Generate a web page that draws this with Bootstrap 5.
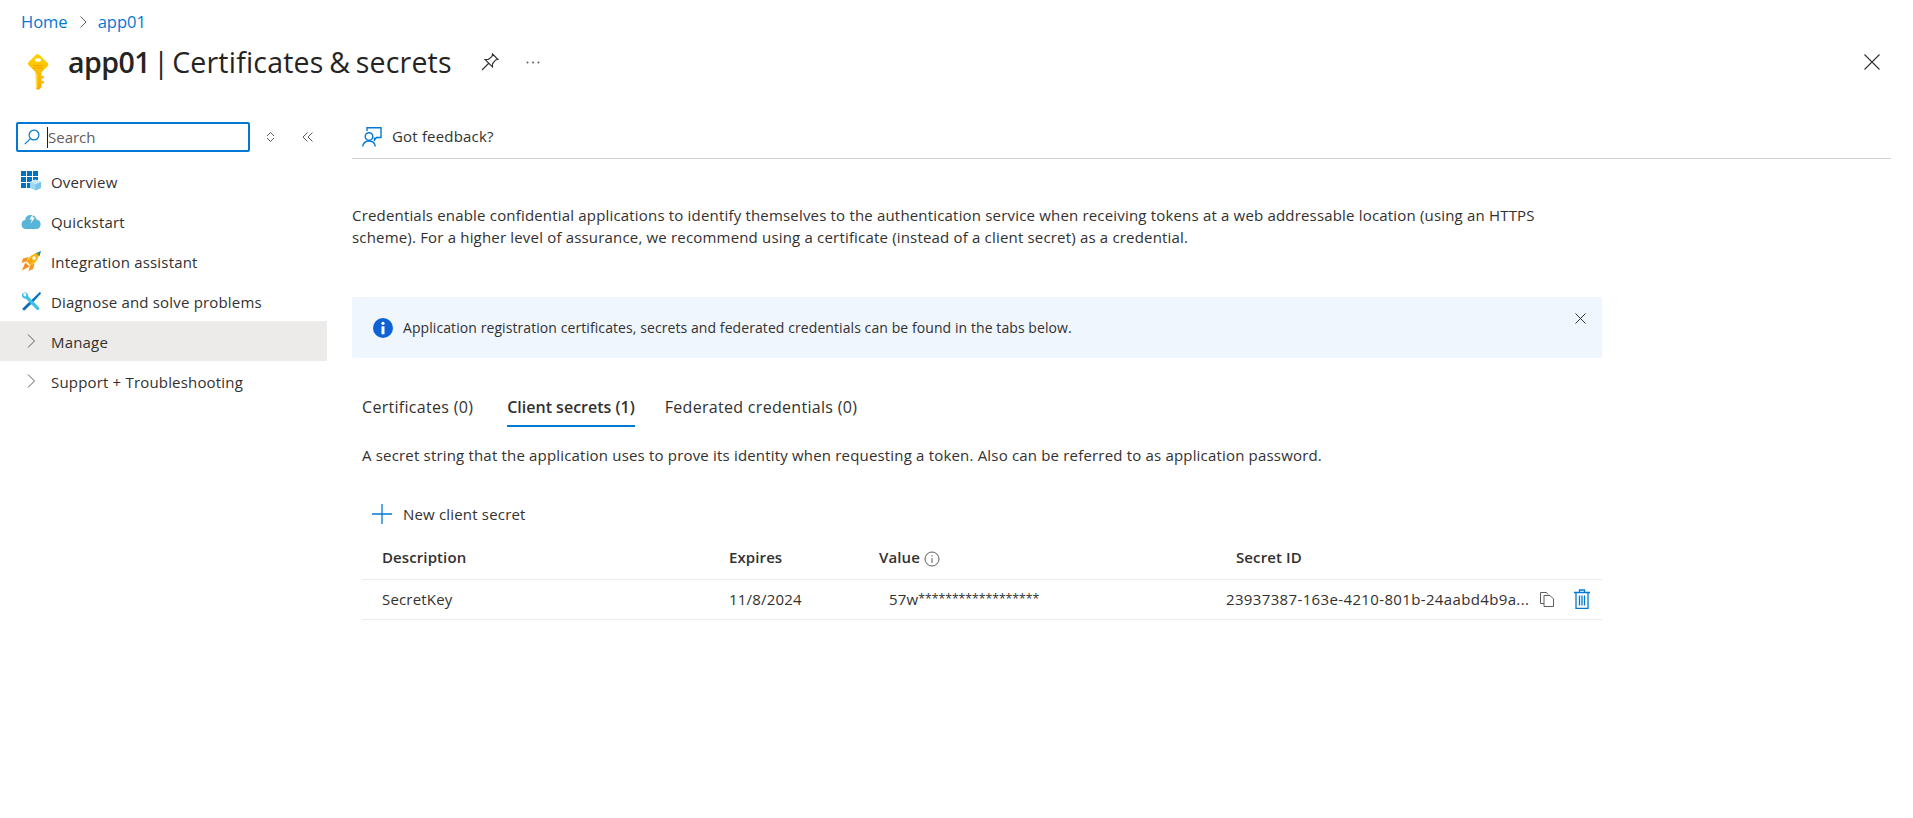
<!DOCTYPE html>
<html lang="en">
<head>
    <meta charset="UTF-8">
    <meta name="viewport" content="width=device-width, initial-scale=1.0">
    <title>app01 | Certificates &amp; secrets</title>
    <link rel="stylesheet" href="https://cdn.jsdelivr.net/npm/bootstrap@5.3.3/dist/css/bootstrap.min.css">
    <style>
        body {
            font-family: "Open Sans", "Liberation Sans", sans-serif;
            font-size: 15px;
            color: #323130;
            background: #fff;
            height: 818px;
            overflow: hidden;
            letter-spacing: 0.18px;
        }

        a {
            color: inherit;
            text-decoration: none;
        }

        .crumbs {
            --bs-breadcrumb-margin-bottom: 0;
            --bs-breadcrumb-item-padding-x: 0;
            --bs-breadcrumb-divider: "";
            padding: 10px 0 0 21px;
            height: 34px;
            font-size: 16.5px;
            line-height: 24px;
            letter-spacing: 0;
        }

        .crumbs a {
            color: #0078d4;
        }

        .crumbs svg {
            margin: 0 11px 0 12px;
        }

        .title-row {
            height: 40px;
            margin-top: 8px;
            padding-left: 27px;
            padding-right: 33px;
        }

        .key-ico {
            margin-top: 20px;
        }

        .title-text {
            font-size: 28.5px;
            line-height: 40px;
            font-weight: 400;
            margin: 0 26px 0 19px;
            letter-spacing: 0.2px;
            word-spacing: -4.5px;
            color: #252423;
        }

        .title-text b {
            font-weight: 600;
            letter-spacing: -0.5px;
        }

        .title-page {
            word-spacing: -2px;
        }

        .page-body {
            margin-top: 40px;
        }

        .side-col {
            width: 327px;
            flex-shrink: 0;
        }

        .search-row {
            height: 30px;
            padding-left: 16px;
        }

        .search-box {
            width: 234px;
            height: 30px;
            border: 2px solid #0078d4;
            border-radius: 2px;
            padding-left: 6px;
        }

        .search-box input {
            border: 0;
            outline: 0;
            padding: 0 0 0 8px;
            background: transparent;
            box-shadow: none;
            font-size: 15px;
            height: 26px;
        }

        .search-box input::placeholder {
            color: #605e5c;
        }

        .text-caret {
            position: absolute;
            left: 29px;
            top: 3px;
            width: 1px;
            height: 21px;
            background: #201f1e;
        }

        .side-tools {
            margin-left: 16px;
            gap: 27px;
        }

        .side-nav {
            --bs-list-group-bg: transparent;
            --bs-list-group-border-width: 0;
            --bs-list-group-border-radius: 0;
            --bs-list-group-item-padding-x: 21px;
            --bs-list-group-item-padding-y: 0;
            --bs-list-group-color: #323130;
            margin-top: 9px;
        }

        .side-nav .list-group-item {
            height: 40px;
            gap: 10px;
        }

        .side-nav .list-group-item span {
            padding-top: 2px;
        }

        .side-nav .is-hover {
            background: #edebe9;
        }

        .nav-ico {
            width: 20px;
            height: 20px;
            flex-shrink: 0;
        }

        .main-col {
            margin-left: 25px;
            width: 1539px;
        }

        .cmd-bar {
            height: 37px;
            padding: 0 0 7px 10px;
            border-bottom: 1px solid #d2d0ce;
            gap: 10px;
        }

        .intro-text {
            margin: 45px 0 0;
            line-height: 22px;
            white-space: nowrap;
        }

        .notice-box {
            --bs-alert-margin-bottom: 0;
            --bs-alert-border-radius: 2px;
            width: 1250px;
            height: 61px;
            margin-top: 49px;
            padding: 0 0 0 21px;
            border: 0;
            background: #eff6fe;
            color: #323130;
            font-size: 14px;
            letter-spacing: 0.08px;
            gap: 10px;
        }

        .notice-close {
            position: absolute;
            right: 16px;
            top: 16px;
            line-height: 0;
        }

        .tab-strip {
            margin: 32px 0 0 10px;
            gap: 34px;
            --bs-nav-link-padding-x: 0;
            --bs-nav-link-padding-y: 0;
            --bs-nav-link-color: #323130;
            --bs-nav-link-hover-color: #323130;
            font-size: 16px;
            letter-spacing: 0.3px;
        }

        .tab-strip .nav-link {
            height: 37px;
            line-height: 34px;
        }

        .tab-strip .nav-link.active {
            font-weight: 600;
            letter-spacing: 0;
            margin-right: -4px;
            border-bottom: 2px solid #0078d4;
        }

        .lead-line {
            margin: 17px 0 0 10px;
            line-height: 23px;
        }

        .add-btn {
            --bs-btn-padding-x: 0;
            --bs-btn-padding-y: 0;
            --bs-btn-border-width: 0;
            --bs-btn-color: #323130;
            --bs-btn-font-size: 15px;
            margin: 35px 0 0 20px;
            gap: 11px;
            height: 24px;
            letter-spacing: inherit;
        }

        .secret-table {
            --bs-table-color: #323130;
            --bs-table-border-color: #edebe9;
            width: 1240px;
            margin: 11px 0 0 10px;
            table-layout: fixed;
            font-size: 15px;
        }

        .secret-table th,
        .secret-table td {
            padding: 0;
            vertical-align: middle;
        }

        .secret-table thead th {
            height: 42px;
            padding-bottom: 2px;
            font-weight: 600;
            letter-spacing: 0.1px;
        }

        .secret-table td {
            height: 40px;
        }

        .stars {
            font-size: 12.2px;
            letter-spacing: 0;
            position: relative;
            top: -2px;
        }

        .id-text {
            letter-spacing: 0.36px;
        }

        .pl-10 {
            padding-left: 10px !important;
        }

        .pl-20 {
            padding-left: 20px !important;
        }

        .id-cell {
            gap: 11px;
        }

        .icon-gap {
            margin-left: 9px;
        }
    </style>
</head>
<body>
    <ol class="breadcrumb crumbs">
        <li class="breadcrumb-item"><a href="#">Home</a></li>
        <li class="breadcrumb-item d-flex align-items-center">
            <svg width="7" height="12" viewBox="0 0 7 12" fill="none" stroke="#605e5c"><path d="M.5.5 6 6 .5 11.5"/></svg>
            <a href="#">app01</a>
        </li>
    </ol>

    <div class="d-flex align-items-center title-row">
        <svg width="22" height="36" viewBox="0 0 22 36" class="flex-shrink-0 key-ico">
            <defs>
                <linearGradient id="keyFill" x1="0" y1="0" x2="0" y2="1">
                    <stop offset="0" stop-color="#ffd400"/>
                    <stop offset="1" stop-color="#f8a800"/>
                </linearGradient>
            </defs>
            <path d="M11 0.5c.7 0 1.4.3 1.9.8l7.800 7.800c.8.8.8 2.100 0 2.900l-6.200 6.200V33l-3 3-2.500-1.500-.5-16.500-7-6.900c-.8-.8-.8-2.100 0-2.900l7.600-7.800c.5-.5 1.200-.8 1.900-.8z" fill="url(#keyFill)"/>
            <path d="M14.500 22h2.200v2.500h-2.200zM14.500 27h2.200v2.500h-2.200z" fill="#fbb000"/>
            <ellipse cx="11" cy="6" rx="3" ry="1.800" fill="#fff"/>
            <path d="M6 11h10v1H6zM6 13.400h10v1H6z" fill="#f5a300"/>
            <path d="M9 20h1.300v14H9z" fill="#ffe34d"/>
        </svg>
        <h1 class="title-text"><b>app01</b> | <span class="title-page">Certificates &amp; secrets</span></h1>
        <svg width="24" height="18" viewBox="0 0 18 18" fill="none" stroke="#323130" stroke-width="1.100"><path d="M11.500 1 17 6.500 14.600 7 11.500 10.800 11.500 14 4 6.500 7.300 6.500 11 3.400zM7.500 10.500 1 17"/></svg>
        <svg class="ms-4" width="14" height="3" viewBox="0 0 14 3" fill="#605e5c"><circle cx="1.500" cy="1.500" r="1"/><circle cx="7" cy="1.500" r="1"/><circle cx="12.500" cy="1.500" r="1"/></svg>
        <svg class="ms-auto" width="16" height="16" viewBox="0 0 16 16" stroke="#323130" stroke-width="1.100"><path d="M.5.5l15 15M15.500.5l-15 15"/></svg>
    </div>

    <div class="d-flex page-body">
        <aside class="side-col">
            <div class="d-flex align-items-center search-row">
                <div class="d-flex align-items-center position-relative search-box">
                    <svg width="16" height="16" viewBox="0 0 16 16" fill="none" stroke="#0078d4" stroke-width="1.200" class="flex-shrink-0"><circle cx="10" cy="6" r="4.900"/><path d="M6.400 9.600.8 15.200"/></svg>
                    <input class="form-control" type="text" placeholder="Search" aria-label="Search">
                    <span class="text-caret"></span>
                </div>
                <div class="d-flex align-items-center side-tools">
                    <svg width="9" height="12" viewBox="0 0 9 12" fill="none" stroke="#605e5c"><path d="M1 5 4.500 1.500 8 5M1 7 4.500 10.500 8 7"/></svg>
                    <svg width="11" height="10" viewBox="0 0 11 10" fill="none" stroke="#605e5c"><path d="M5.500.5 1 5l4.500 4.500M10.500.5 6 5l4.500 4.500"/></svg>
                </div>
            </div>
            <div class="list-group side-nav">
                <a href="#" class="list-group-item d-flex align-items-center">
                    <svg class="nav-ico" viewBox="0 0 20 20">
                        <path d="M0 0h5v5H0zM6 0h5v5H6zM12 0h5v5h-5zM0 6h5v5H0zM6 6h5v5H6zM12 6h5v3h-5zM0 12h5v5H0zM6 12h3v5H6z" fill="#0072c6"/>
                        <path d="M14.500 8.500 20 11v6l-5.500 2.500L9 17v-6z" fill="#9fd6f0"/>
                        <path d="M14.500 8.500 20 11l-5.500 2.500L9 11z" fill="#c9e9f8"/>
                        <path d="M14.500 13.500V19.500L20 17v-6z" fill="#7cc4e8"/>
                    </svg>
                    <span>Overview</span>
                </a>
                <a href="#" class="list-group-item d-flex align-items-center">
                    <svg class="nav-ico" viewBox="0 0 20 20">
                        <path d="M5 18a4.500 4.500 0 0 1-.8-8.900A5 5 0 0 1 10 4a5.500 5.500 0 0 1 5.500 4.500A4.800 4.800 0 0 1 15.500 18z" fill="#59b4d9"/>
                        <path d="M12.500 1.500 8.500 8.500h2.500L9.500 13l4.500-6.500h-2.500z" fill="#fff"/>
                    </svg>
                    <span>Quickstart</span>
                </a>
                <a href="#" class="list-group-item d-flex align-items-center">
                    <svg class="nav-ico" viewBox="0 0 20 20">
                        <path d="M7.500 6 2 7.500.5 12l5-1.500z" fill="#f7941d"/>
                        <path d="M13.500 12.500 12 18l-4.500 2L9 14.500z" fill="#f7941d"/>
                        <path d="M4.500 11.500 .8 19.500 8.500 15.500z" fill="#f78a1d"/>
                        <path d="M18.500 1.500C13 2 8 5 5.500 10.500L9.500 14.500C15 12 18 7 18.500 1.500z" fill="#fcb714"/>
                        <path d="M15 2.300 20 0l-1.600 5.200z" fill="#0072c6"/>
                        <path d="M15.800 2.500 18.500 1.500 17.800 4.300z" fill="#7fba00"/>
                        <circle cx="13" cy="7" r="1.700" fill="#fff"/>
                        <path d="M6.500 11 11 7.500M8 12.500 11.500 9.500" stroke="#e8801a" stroke-width=".8"/>
                    </svg>
                    <span>Integration assistant</span>
                </a>
                <a href="#" class="list-group-item d-flex align-items-center">
                    <svg class="nav-ico" viewBox="0 0 20 20">
                        <path d="M19 .8 7.500 12 9.500 14 20 2.500z" fill="#0072c6"/>
                        <path d="M2.500 1.500 1 3c-.5 2.200.5 4.200 2.800 4.700l1.200.1L15.500 18.500c.7.700 1.700.7 2.300 0s.7-1.700 0-2.300L7.500 5.800C7.500 3 5.500.8 3 1l2.500 2.500-.8 2-2-.5z" fill="#3ec1e6"/>
                        <path d="M7.500 11.500 2 17c-.7.700-.7 1.500 0 2s1.500.7 2 0L9.500 13.500z" fill="#0a6fb5"/>
                    </svg>
                    <span>Diagnose and solve problems</span>
                </a>
                <a href="#" class="list-group-item d-flex align-items-center is-hover">
                    <svg class="nav-ico" viewBox="0 0 20 20" fill="none" stroke="#605e5c"><path d="M7 3.500 13.500 10 7 16.500"/></svg>
                    <span>Manage</span>
                </a>
                <a href="#" class="list-group-item d-flex align-items-center">
                    <svg class="nav-ico" viewBox="0 0 20 20" fill="none" stroke="#605e5c"><path d="M7 3.500 13.500 10 7 16.500"/></svg>
                    <span>Support + Troubleshooting</span>
                </a>
            </div>
        </aside>

        <main class="main-col">
            <div class="d-flex align-items-center cmd-bar">
                <svg width="20" height="20" viewBox="0 0 20 20" fill="none" stroke="#0078d4" stroke-width="1.400"><path d="M5 4V.8h14v9.700h-4.500L12.500 13v-2.500"/><circle cx="7" cy="9.500" r="3.800"/><path d="M.7 19.500c.5-3.500 3-5.500 6.300-5.500s5.800 2 6.300 5.500"/></svg>
                <span>Got feedback?</span>
            </div>

            <p class="intro-text">Credentials enable confidential applications to identify themselves to the authentication service when receiving tokens at a web addressable location (using an HTTPS<br>scheme). For a higher level of assurance, we recommend using a certificate (instead of a client secret) as a credential.</p>

            <div class="alert d-flex align-items-center position-relative notice-box" role="alert">
                <svg width="20" height="20" viewBox="0 0 20 20" class="flex-shrink-0"><circle cx="10" cy="10" r="10" fill="#0f62d6"/><circle cx="10" cy="5.300" r="1.600" fill="#fff"/><path d="M8.500 8.300h3v8h-3z" fill="#fff"/></svg>
                <span>Application registration certificates, secrets and federated credentials can be found in the tabs below.</span>
                <span class="notice-close"><svg width="11" height="11" viewBox="0 0 11 11" stroke="#323130"><path d="M.5.500l10 10M10.500.500l-10 10"/></svg></span>
            </div>

            <ul class="nav tab-strip">
                <li class="nav-item"><a class="nav-link" href="#">Certificates (0)</a></li>
                <li class="nav-item"><a class="nav-link active" href="#">Client secrets (1)</a></li>
                <li class="nav-item"><a class="nav-link" href="#">Federated credentials (0)</a></li>
            </ul>

            <p class="lead-line">A secret string that the application uses to prove its identity when requesting a token. Also can be referred to as application password.</p>

            <button type="button" class="btn d-flex align-items-center add-btn">
                <svg width="20" height="20" viewBox="0 0 20 20" stroke="#0078d4" stroke-width="1.300"><path d="M10 0v20M0 10h20"/></svg>
                <span>New client secret</span>
            </button>

            <table class="table secret-table">
                <thead>
                    <tr>
                        <th class="pl-20" style="width: 357px">Description</th>
                        <th class="pl-10" style="width: 150px">Expires</th>
                        <th class="pl-10" style="width: 347px">Value <svg width="16" height="16" viewBox="0 0 16 16" fill="none" stroke="#605e5c" class="align-text-bottom"><circle cx="8" cy="8" r="7"/><path d="M8 7v5M8 4.200v1.300"/></svg></th>
                        <th class="pl-20" style="width: 386px">Secret ID</th>
                    </tr>
                </thead>
                <tbody>
                    <tr>
                        <td class="pl-20">SecretKey</td>
                        <td class="pl-10">11/8/2024</td>
                        <td class="pl-20">57w<span class="stars">******************</span></td>
                        <td class="pl-10">
                            <div class="d-flex align-items-center id-cell">
                                <span class="id-text">23937387-163e-4210-801b-24aabd4b9a...</span>
                                <svg width="14" height="15" viewBox="0 0 14 15" fill="none" stroke="#605e5c" class="flex-shrink-0"><path d="M4 11.500H.5V.5h6l1.500 2"/><path d="M4 3.500h6l3.500 3.500v7.500H4z"/></svg>
                                <svg class="icon-gap flex-shrink-0" width="16" height="20" viewBox="0 0 16 20" fill="none" stroke="#0078d4" stroke-width="1.300"><path d="M0 3.500h16M5.500 3.500V1h5v2.500M2 3.500v15.800h12V3.500M5.500 6.500v10M8 6.500v10M10.500 6.500v10"/></svg>
                            </div>
                        </td>
                    </tr>
                </tbody>
            </table>
        </main>
    </div>

    <script src="https://cdn.jsdelivr.net/npm/bootstrap@5.3.3/dist/js/bootstrap.bundle.min.js"></script>
</body>
</html>
